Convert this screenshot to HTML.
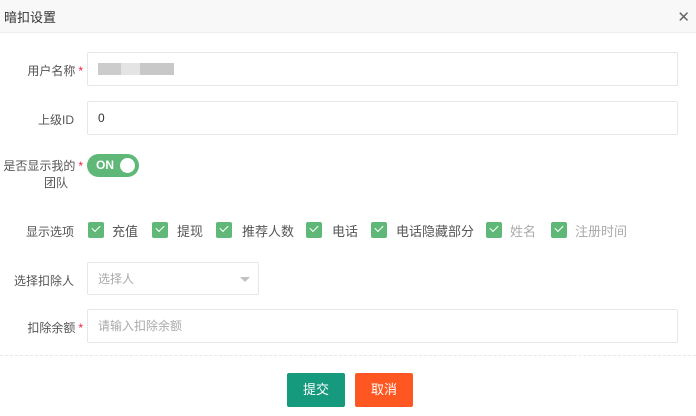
<!DOCTYPE html><html><head><meta charset="utf-8"><style>
*{margin:0;padding:0;box-sizing:border-box}
body{width:696px;height:416px;background:#fff;font-family:"Liberation Sans","Noto Sans CJK SC",sans-serif;font-size:12px;color:#333;position:relative;overflow:hidden}
.a{position:absolute}
.hd{left:0;top:0;width:696px;height:33px;background:#f8f8f8;border-bottom:1px solid #eee;padding:7px 0 0 4px;font-size:13px}
.lb{right:613px;text-align:right;white-space:nowrap;color:#555}
.ns{right:622px}
.st{color:#e23;margin-left:3px}
.in{border:1px solid #e6e6e6;border-radius:2px;background:#fff;padding-left:10px;line-height:32px}
.cb{width:16px;height:16px;background:#5fb878;border-radius:2px}
.cb:after{content:"";position:absolute;left:4px;top:3px;width:7px;height:4px;border-left:1.5px solid #fff;border-bottom:1.5px solid #fff;transform:rotate(-45deg)}
.ct{font-size:13px;color:#555}
</style></head><body>
<div class="a hd">暗扣设置</div>
<div class="a" style="right:6px;top:8px;font-size:15px;color:#666">✕</div>
<div class="a lb" style="top:62px">用户名称<span class="st">*</span></div>
<div class="a in" style="left:87px;top:52px;width:591px;height:34px"><span style="display:inline-block;width:76px;height:12px;margin-top:10px;background:linear-gradient(90deg,#ccc 0 30%,#e4e4e4 30% 55%,#c8c8c8 55% 100%)"></span></div>
<div class="a lb ns" style="top:111px">上级ID</div>
<div class="a in" style="left:87px;top:101px;width:591px;height:34px">0</div>
<div class="a lb" style="top:157px">是否显示我的<span class="st">*</span></div>
<div class="a" style="left:44px;top:174px;color:#555">团队</div>
<div class="a" style="left:87px;top:154px;width:52px;height:23px;border-radius:12px;background:#5fb878;color:#fff;font-weight:bold;font-size:12px;padding:4px 0 0 9px">ON<span class="a" style="left:33px;top:4px;width:15px;height:15px;border-radius:50%;background:#fff"></span></div>
<div class="a lb ns" style="top:223px">显示选项</div>
<div class="a cb" style="left:88px;top:222px"></div><div class="a ct" style="left:112px;top:221px">充值</div>
<div class="a cb" style="left:152px;top:222px"></div><div class="a ct" style="left:177px;top:221px">提现</div>
<div class="a cb" style="left:216px;top:222px"></div><div class="a ct" style="left:242px;top:221px">推荐人数</div>
<div class="a cb" style="left:306px;top:222px"></div><div class="a ct" style="left:332px;top:221px">电话</div>
<div class="a cb" style="left:371px;top:222px"></div><div class="a ct" style="left:396px;top:221px">电话隐藏部分</div>
<div class="a cb" style="left:486px;top:222px"></div><div class="a ct" style="left:510px;top:221px;color:#aaa">姓名</div>
<div class="a cb" style="left:551px;top:222px"></div><div class="a ct" style="left:575px;top:221px;color:#aaa">注册时间</div>
<div class="a lb ns" style="top:272px">选择扣除人</div>
<div class="a in" style="left:87px;top:262px;width:172px;height:33px;color:#aaa">选择人<span class="a" style="left:152px;top:14px;border:5px solid transparent;border-top:5px solid #c2c2c2"></span></div>
<div class="a lb" style="top:319px">扣除余额<span class="st">*</span></div>
<div class="a in" style="left:87px;top:309px;width:591px;height:34px;color:#aaa">请输入扣除余额</div>
<div class="a" style="left:0;top:355px;width:696px;border-top:1px dashed #e8e8e8"></div>
<div class="a" style="left:287px;top:373px;width:58px;height:34px;background:#169a7e;color:#fff;text-align:center;line-height:34px;border-radius:2px;font-size:13px">提交</div>
<div class="a" style="left:355px;top:373px;width:58px;height:34px;background:#ff5722;color:#fff;text-align:center;line-height:34px;border-radius:2px;font-size:13px">取消</div>
</body></html>
